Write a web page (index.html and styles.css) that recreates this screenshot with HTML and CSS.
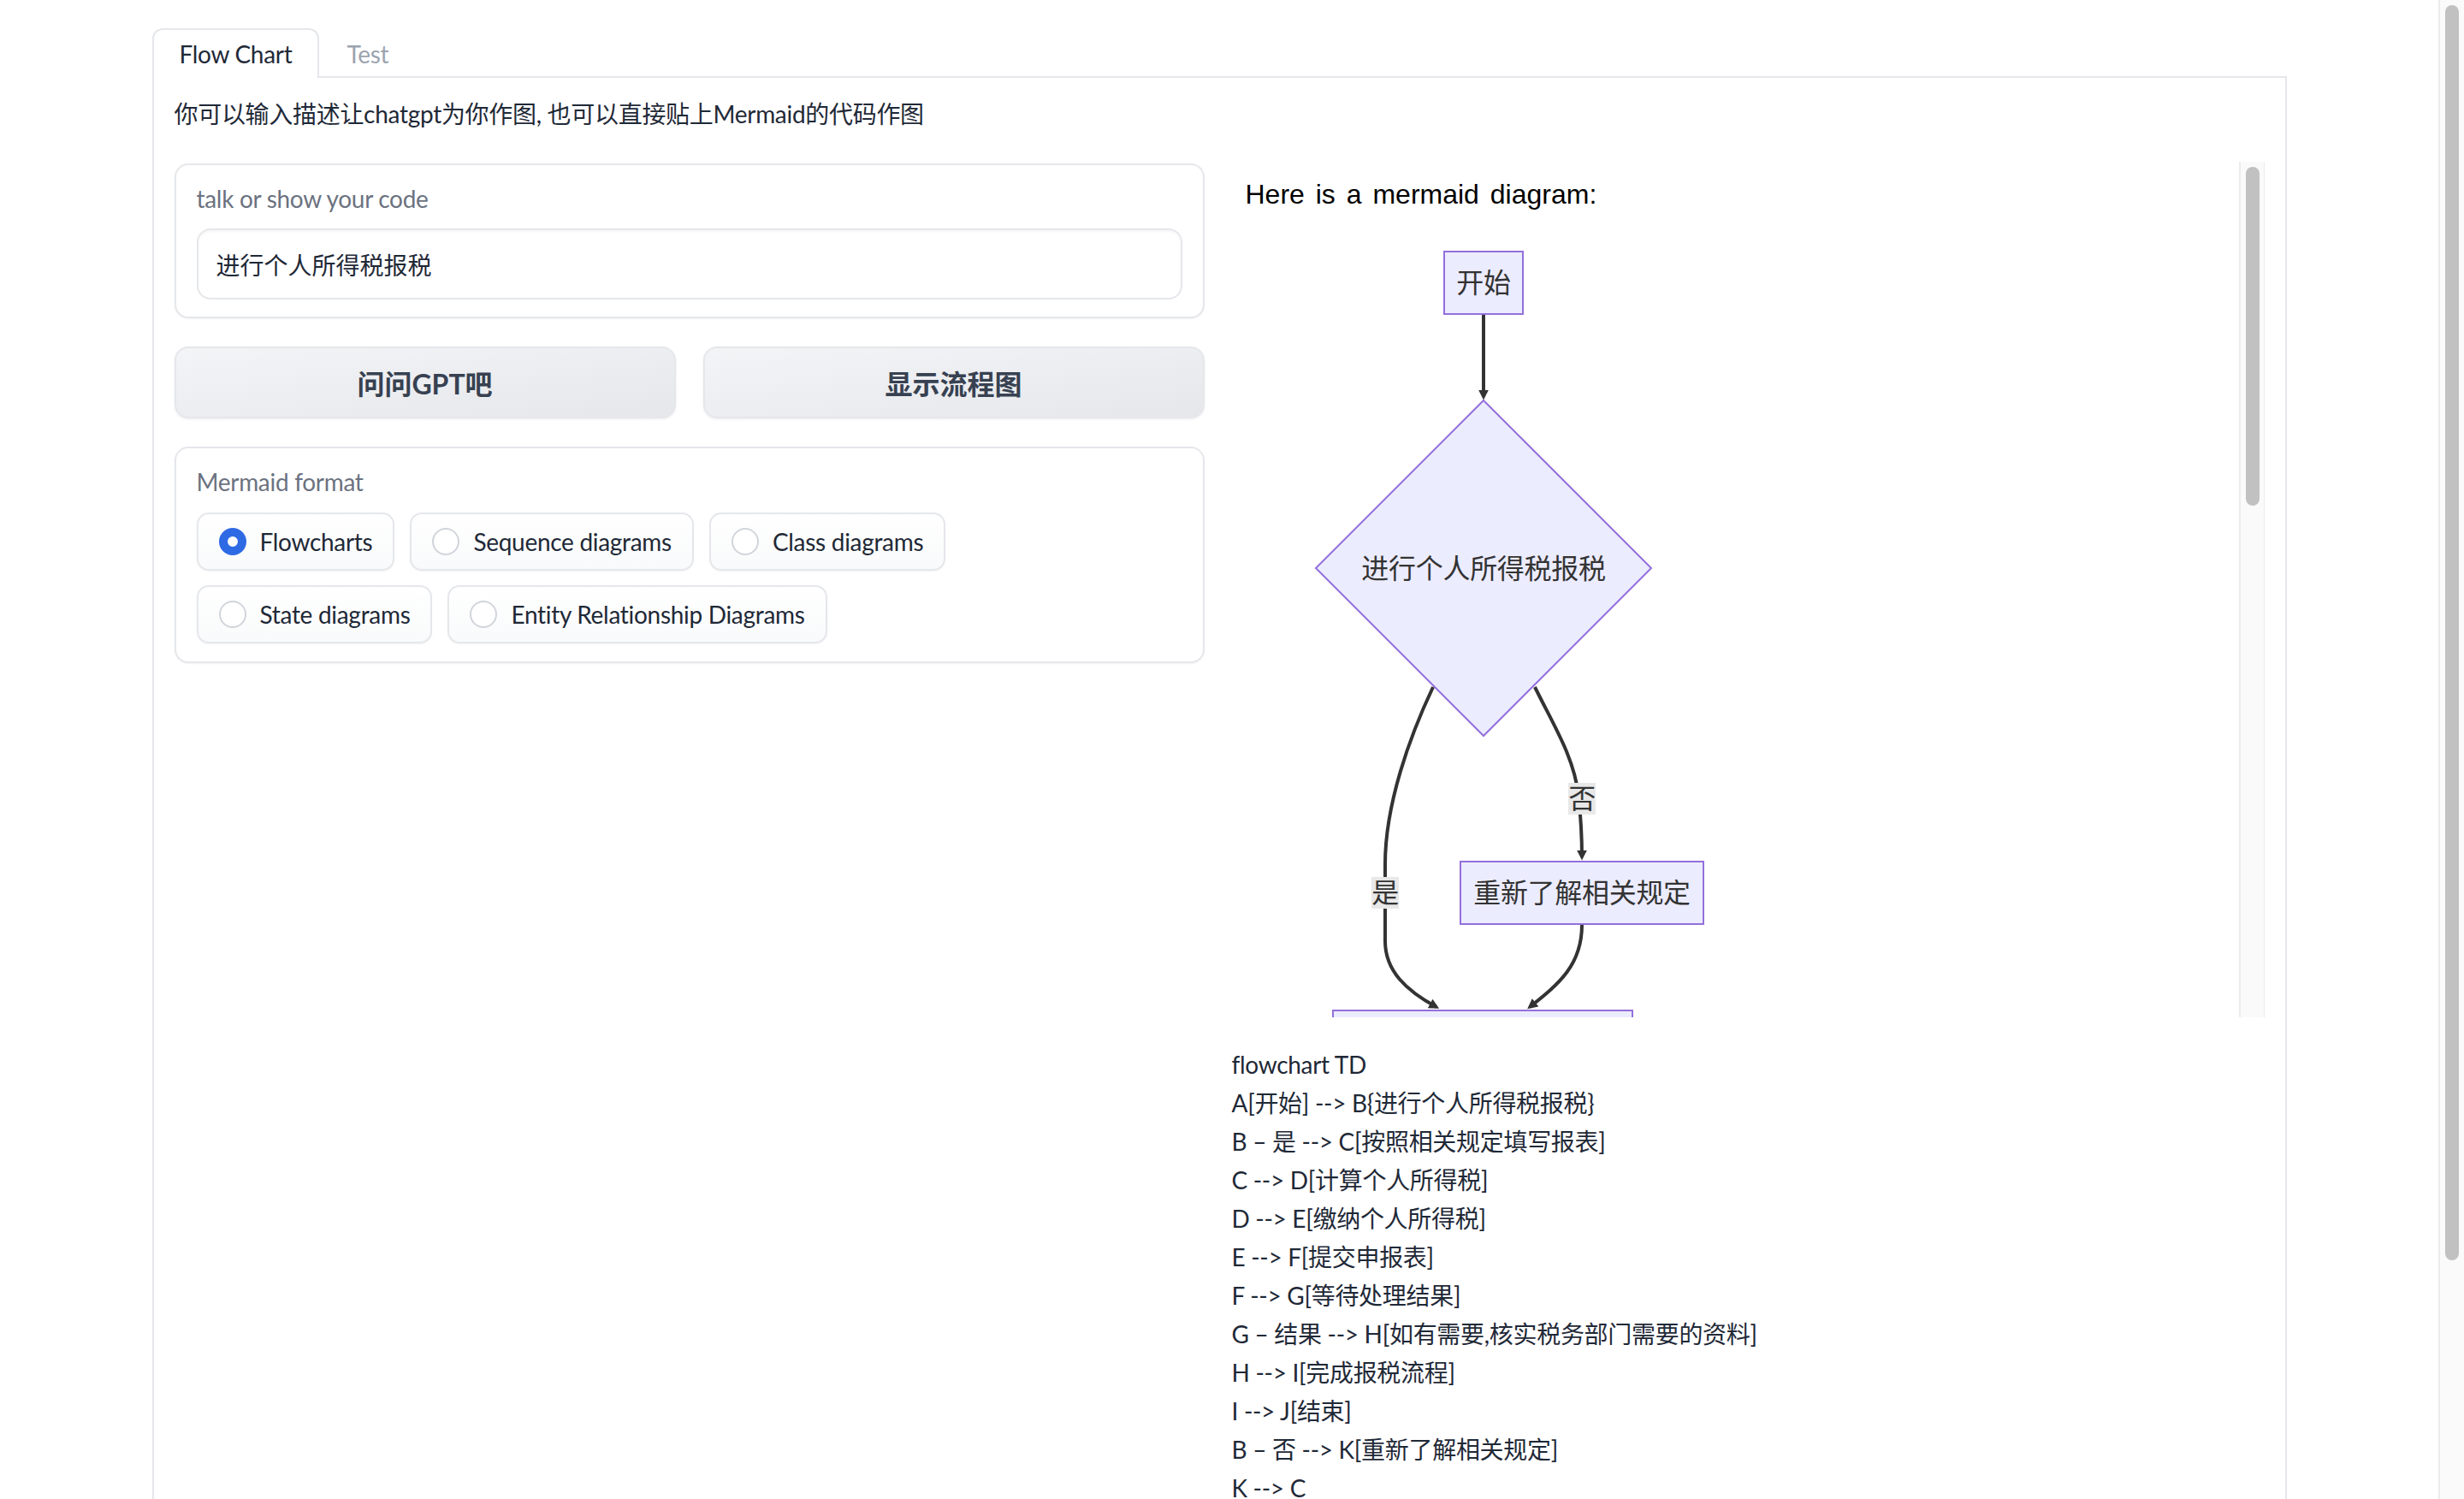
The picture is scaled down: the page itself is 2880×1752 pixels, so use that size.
FILE: index.html
```html
<!DOCTYPE html>
<html lang="zh-CN">
<head>
    <meta charset="UTF-8">
    <title>Flow Chart</title>
    <link rel="stylesheet" href="styles.css">
</head>
<body>
    <div class="page">
        <div class="tabs">
            <div class="tab-nav">
                <button class="tab selected">Flow Chart</button>
                <button class="tab">Test</button>
            </div>

            <div class="tab-panel">
                <p class="intro">你可以输入描述让chatgpt为你作图, 也可以直接贴上Mermaid的代码作图</p>

                <div class="row">
                    <div class="col">
                        <label class="block">
                            <span class="label">talk or show your code</span>
                            <input type="text" value="进行个人所得税报税">
                        </label>

                        <div class="buttons">
                            <button class="btn">问问GPT吧</button>
                            <button class="btn">显示流程图</button>
                        </div>

                        <div class="block radio-block">
                            <span class="label">Mermaid format</span>
                            <div class="radio-row">
                                <label class="option"><span class="radio checked"></span>Flowcharts</label>
                                <label class="option"><span class="radio"></span>Sequence diagrams</label>
                                <label class="option"><span class="radio"></span>Class diagrams</label>
                            </div>
                            <div class="radio-row">
                                <label class="option"><span class="radio"></span>State diagrams</label>
                                <label class="option"><span class="radio"></span>Entity Relationship Diagrams</label>
                            </div>
                        </div>
                    </div>

                    <div class="col output">
                        <div class="diagram-box">
                            <div class="diagram-view">
                                <p class="diagram-title">Here is a mermaid diagram:</p>
                                <svg class="chart" width="1145" height="940" viewBox="1456 260 1145 940">
                                    <defs>
                                        <marker id="arrow" viewBox="0 0 10 10" refX="7" refY="5" markerWidth="3" markerHeight="3" orient="auto">
                                            <path d="M0,0 L10,5 L0,10 z" fill="#333"/>
                                        </marker>
                                    </defs>
                                    <g fill="#ececff" stroke="#9370db" stroke-width="2">
                                        <rect x="1688" y="294" width="92" height="73"/>
                                        <polygon points="1734,468 1930,664 1734,860 1538,664"/>
                                        <rect x="1707" y="1007" width="284" height="73"/>
                                        <rect x="1558" y="1181" width="350" height="100"/>
                                    </g>
                                    <g fill="none" stroke="#333" stroke-width="4">
                                        <path d="M1734,368 L1734,464" marker-end="url(#arrow)"/>
                                        <path d="M1675,803 C1648,860 1619,940 1619,1010 L1619,1100 C1619,1135 1644,1158 1679,1177" marker-end="url(#arrow)"/>
                                        <path d="M1794,803 C1816,848 1840,885 1845,930 C1848,958 1849,980 1849,1002" marker-end="url(#arrow)"/>
                                        <path d="M1849,1081 C1849,1128 1822,1150 1788,1177" marker-end="url(#arrow)"/>
                                    </g>
                                    <rect x="1603" y="1025" width="32" height="37" fill="#e8e8e8"/>
                                    <rect x="1833" y="915" width="32" height="37" fill="#e8e8e8"/>
                                    <g class="chart-text" text-anchor="middle">
                                        <text x="1734" y="342">开始</text>
                                        <text x="1734" y="676">进行个人所得税报税</text>
                                        <text x="1849" y="945">否</text>
                                        <text x="1619" y="1055">是</text>
                                        <text x="1849" y="1055">重新了解相关规定</text>
                                    </g>
                                </svg>
                            </div>
                            <div class="track"><div class="thumb"></div></div>
                        </div>

                        <div class="code">
                            <p>flowchart TD</p>
                            <p>A[开始] --&gt; B{进行个人所得税报税}</p>
                            <p>B &ndash; 是 --&gt; C[按照相关规定填写报表]</p>
                            <p>C --&gt; D[计算个人所得税]</p>
                            <p>D --&gt; E[缴纳个人所得税]</p>
                            <p>E --&gt; F[提交申报表]</p>
                            <p>F --&gt; G[等待处理结果]</p>
                            <p>G &ndash; 结果 --&gt; H[如有需要,核实税务部门需要的资料]</p>
                            <p>H --&gt; I[完成报税流程]</p>
                            <p>I --&gt; J[结束]</p>
                            <p>B &ndash; 否 --&gt; K[重新了解相关规定]</p>
                            <p>K --&gt; C</p>
                        </div>
                    </div>
                </div>
            </div>
        </div>
    </div>

    <div class="page-track"><div class="page-thumb"></div></div>
</body>
</html>
```

FILE: styles.css
```css
* {
    box-sizing: border-box;
}
body {
    margin: 0;
    display: flex;
    height: 100vh;
    overflow: hidden;
    background: #fff;
    font-family: Lato, "Noto Sans CJK SC", sans-serif;
    letter-spacing: -0.3px;
    color: #1f2937;
}
.page {
    flex: 1;
    min-width: 0;
    padding-top: 33px;
}
.tabs {
    max-width: 2495px;
    margin: 0 auto;
}
.tab-nav {
    display: flex;
    border-bottom: 2px solid #e5e7eb;
}
.tab {
    font: 28px/42px Lato, "Noto Sans CJK SC", sans-serif;
    letter-spacing: -0.3px;
    padding: 7px 30px;
    margin-bottom: -2px;
    border: 2px solid transparent;
    border-bottom: none;
    border-radius: 12px 12px 0 0;
    background: none;
    color: #9ca3af;
}
.tab.selected {
    color: #1f2937;
    border-color: #e5e7eb;
    background: #fff;
}
.tab-panel {
    border: 2px solid #e5e7eb;
    border-top: none;
    padding: 22px 24px 24px;
}
.intro {
    margin: 0 0 38px;
    font-size: 28px;
    line-height: 40px;
}
.row {
    display: grid;
    grid-template-columns: 1fr 1fr;
    gap: 32px;
    align-items: start;
}
.col {
    display: flex;
    flex-direction: column;
    gap: 33px;
}
.block {
    display: block;
    border: 2px solid #e5e7eb;
    border-radius: 16px;
    padding: 24px 24px 20px;
    background: #fff;
    box-shadow: 0 1px 2px rgba(0,0,0,0.05);
}
.label {
    display: block;
    font-size: 28px;
    line-height: 30px;
    color: #6b7280;
    margin-bottom: 20px;
}
input {
    display: block;
    width: 100%;
    height: 83px;
    padding: 0 21px;
    font: 28px Lato, "Noto Sans CJK SC", sans-serif;
    color: #1f2937;
    border: 2px solid #e5e7eb;
    border-radius: 16px;
    background: #fff;
    box-shadow: inset 0 2px 3px rgba(0,0,0,0.04);
    outline: none;
}
.buttons {
    display: grid;
    grid-template-columns: 1fr 1fr;
    gap: 32px;
}
.btn {
    height: 84px;
    font: 700 32px Lato, "Noto Sans CJK SC", sans-serif;
    color: #374151;
    border: 2px solid #e5e7eb;
    border-radius: 16px;
    background: linear-gradient(to bottom right, #f3f4f6, #e5e7eb);
    box-shadow: 0 1px 3px rgba(0,0,0,0.08);
}
.radio-block {
    padding-bottom: 21px;
}
.radio-block .label {
    margin-bottom: 21px;
}
.radio-row {
    display: flex;
    gap: 18px;
}
.radio-row + .radio-row {
    margin-top: 17px;
}
.option {
    display: flex;
    align-items: center;
    gap: 16px;
    height: 68px;
    padding: 0 24px;
    font-size: 28px;
    border: 2px solid #e5e7eb;
    border-radius: 14px;
    background: linear-gradient(#fff, #f9fafb);
    box-shadow: 0 1px 2px rgba(0,0,0,0.05);
}
.radio {
    flex: none;
    width: 32px;
    height: 32px;
    border-radius: 50%;
    border: 2px solid #d1d5db;
    background: #fff;
}
.radio.checked {
    border: 10px solid #2f6ae5;
}
.output .diagram-box {
    display: flex;
    height: 1000px;
    margin-top: -2px;
}
.diagram-view {
    flex: 1;
    overflow: hidden;
    padding: 20px 16px 0;
}
.diagram-title {
    margin: 0 0 14px;
    font: 32px/37px "Liberation Sans", "Noto Sans CJK SC", sans-serif;
    letter-spacing: 0;
    word-spacing: 4px;
    color: #000;
}
.chart {
    display: block;
}
.chart-text {
    font-family: "Liberation Sans", "Noto Sans CJK SC", sans-serif;
    font-size: 32px;
    fill: #333;
}
.track {
    width: 30px;
    flex: none;
    border-left: 2px solid #ececec;
    border-right: 1px solid #ececec;
    background: #fafafa;
    padding: 6px 5px 0 6px;
}
.thumb {
    height: 396px;
    border-radius: 8px;
    background: #c1c1c1;
}
.code {
    font-size: 28px;
    line-height: 45px;
}
.code p {
    margin: 0;
}
.page-track {
    flex: none;
    width: 30px;
    border-left: 2px solid #ebebeb;
    background: #fafafa;
    padding: 6px 6px 0;
}
.page-thumb {
    height: 1467px;
    border-radius: 8px;
    background: #c1c1c1;
}
```
